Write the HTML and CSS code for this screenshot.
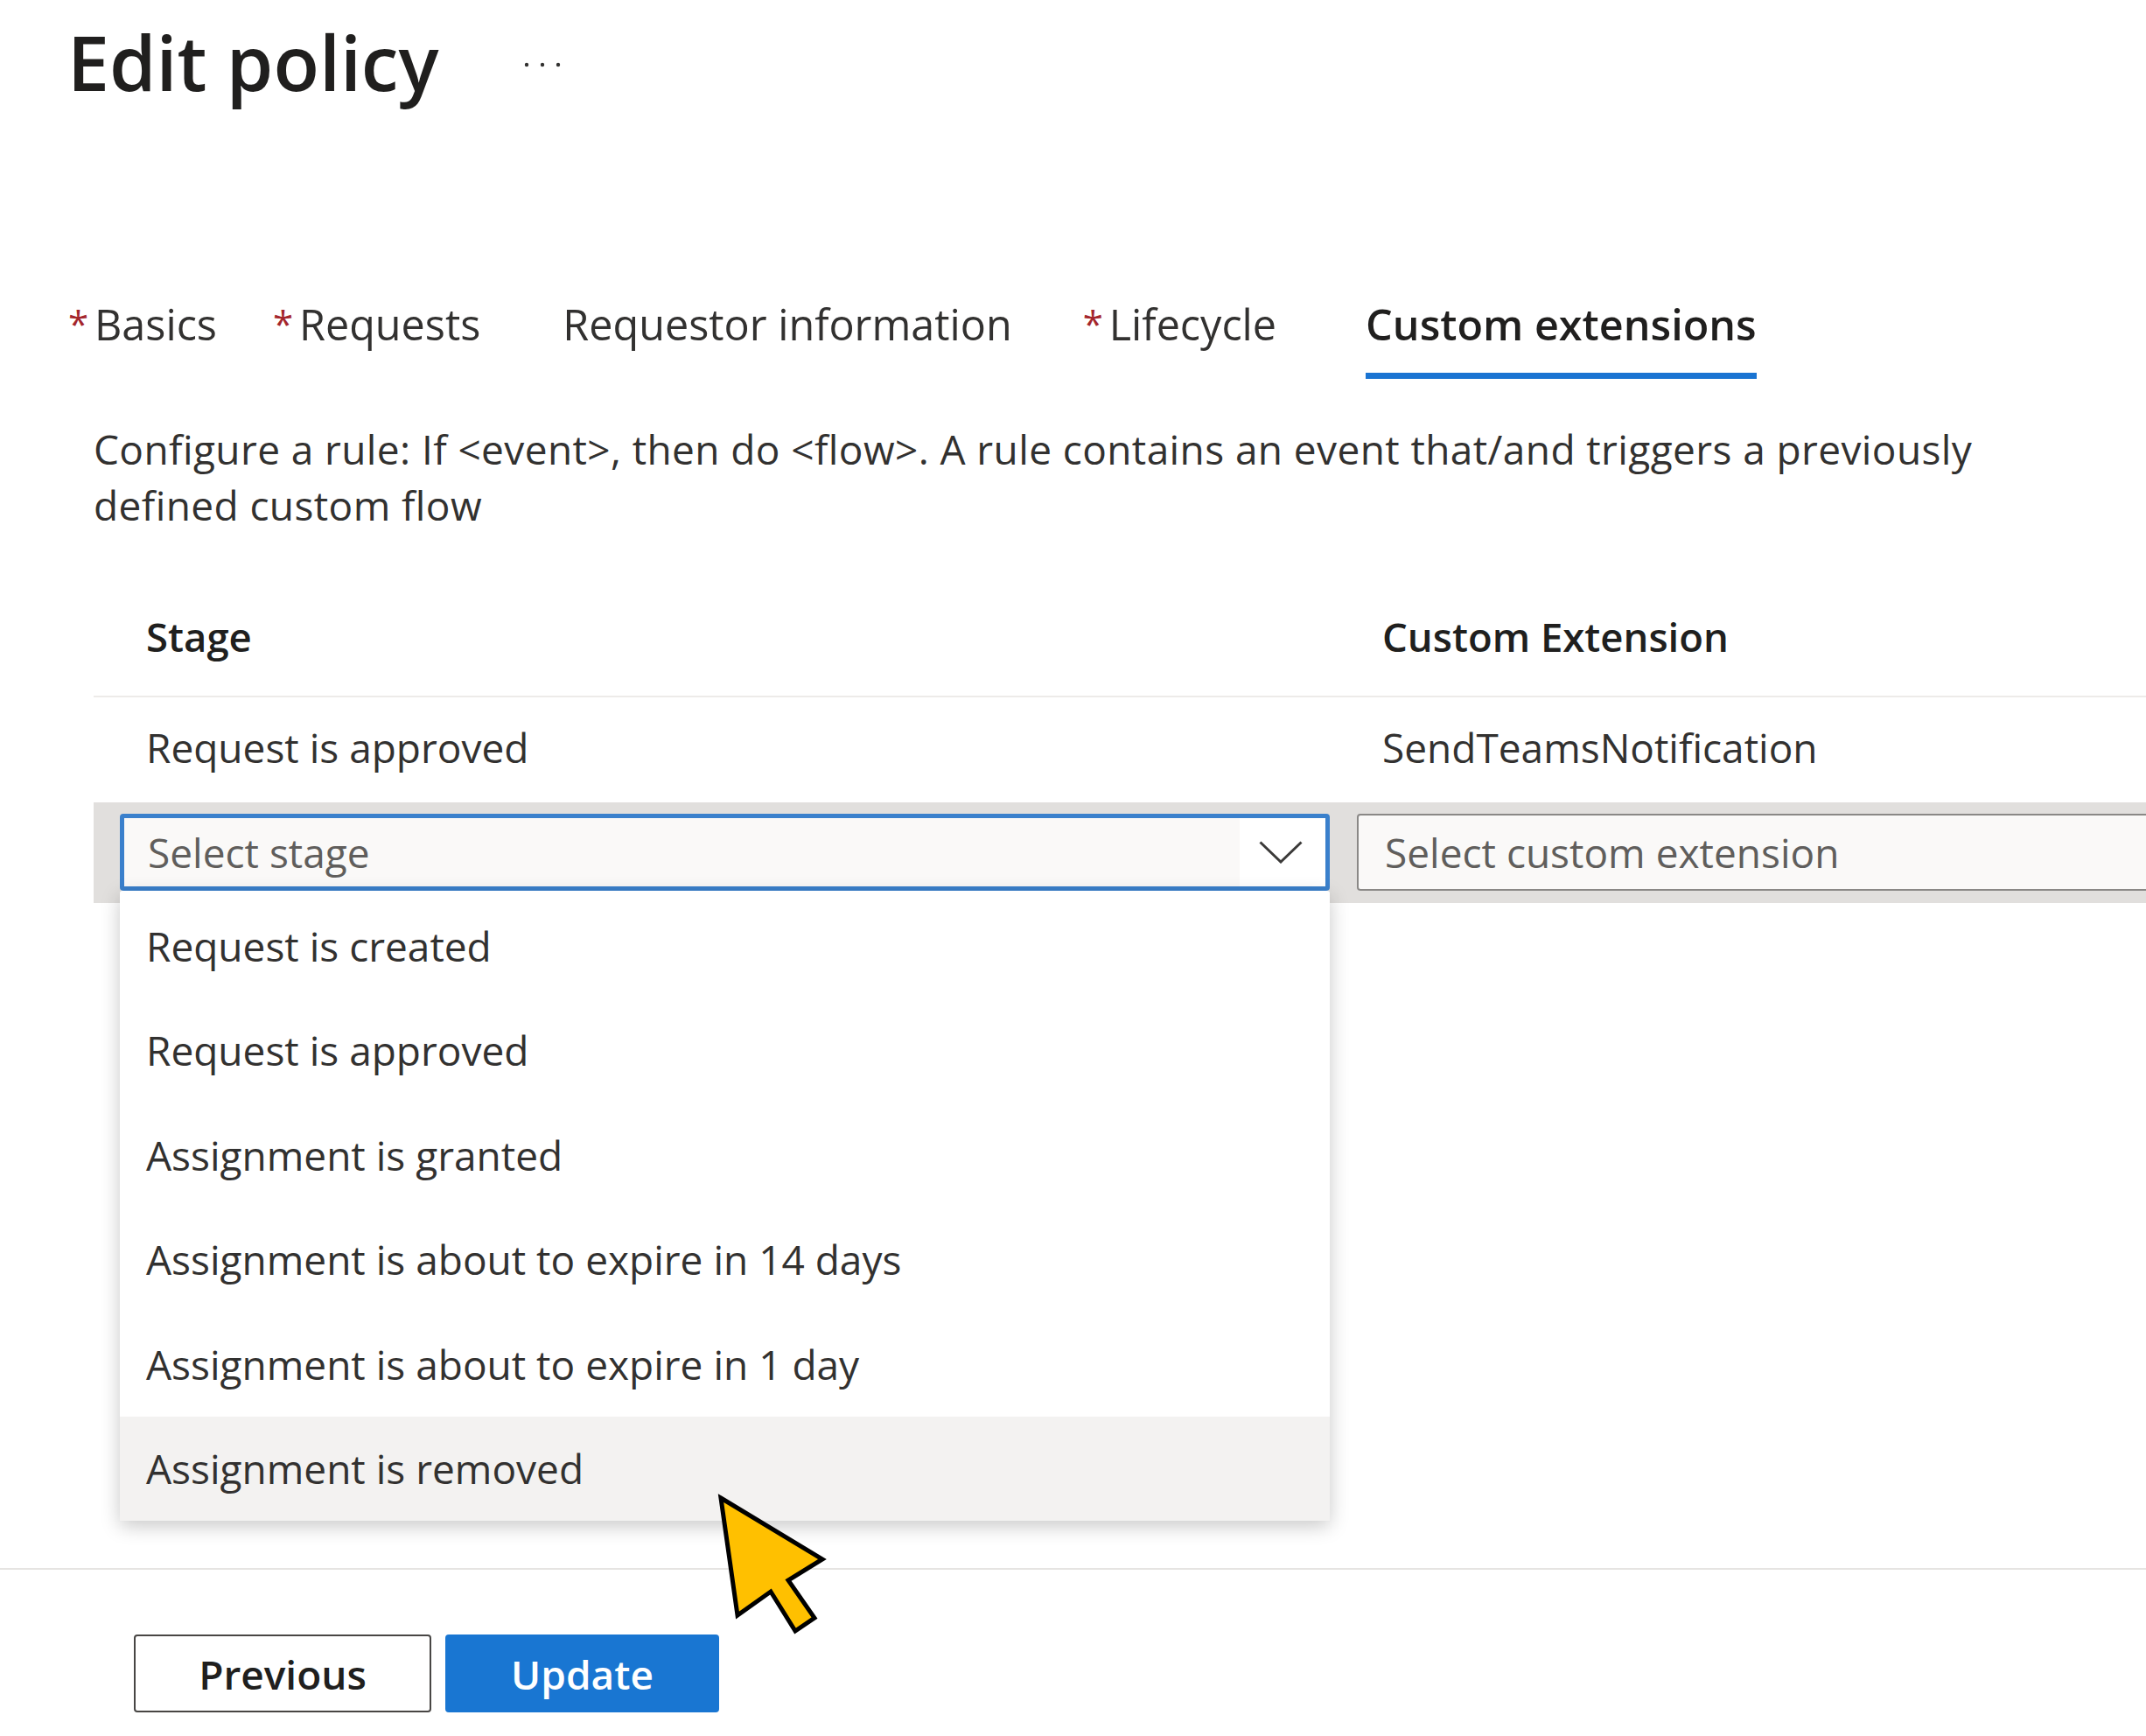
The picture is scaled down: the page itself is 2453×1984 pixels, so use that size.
FILE: index.html
```html
<!DOCTYPE html>
<html lang="en">
<head>
    <meta charset="UTF-8">
    <title>Edit policy</title>
    <link rel="stylesheet" href="styles.css">
</head>
<body>
    <div class="page">
        <header class="titleBar">
            <h1 class="pageTitle">Edit policy</h1>
            <svg class="moreIcon" width="42" height="6" viewBox="0 0 42 6"><circle cx="3" cy="3" r="2.2"/><circle cx="21" cy="3" r="2.2"/><circle cx="39" cy="3" r="2.2"/></svg>
        </header>

        <nav class="tabs">
            <a class="tab"><span class="star">*</span>Basics</a>
            <a class="tab"><span class="star">*</span>Requests</a>
            <a class="tab"><span class="star"></span>Requestor information</a>
            <a class="tab tabLifecycle"><span class="star">*</span>Lifecycle</a>
            <a class="tab tabActive">Custom extensions</a>
        </nav>

        <main class="content">
            <p class="intro">Configure a rule: If &lt;event&gt;, then do &lt;flow&gt;. A rule contains an event that/and triggers a previously<br>defined custom flow</p>

            <div class="tableRow tableHead">
                <div>Stage</div>
                <div>Custom Extension</div>
            </div>
            <div class="tableRow tableBody">
                <div>Request is approved</div>
                <div>SendTeamsNotification</div>
            </div>

            <div class="editRow">
                <div class="field fieldOpen">
                    <span class="fieldText">Select stage</span>
                    <span class="chevronBox">
                        <svg width="50" height="26" viewBox="0 0 50 26"><path d="M1.5 1.5 L25 24 L48.500 1.500" fill="none" stroke="#3b3a39" stroke-width="3"/></svg>
                    </span>
                    <ul class="menu">
                        <li>Request is created</li>
                        <li>Request is approved</li>
                        <li>Assignment is granted</li>
                        <li>Assignment is about to expire in 14 days</li>
                        <li>Assignment is about to expire in 1 day</li>
                        <li class="menuHover">Assignment is removed</li>
                    </ul>
                </div>
                <div class="field">
                    <span class="fieldText">Select custom extension</span>
                </div>
            </div>
        </main>

        <footer class="footer">
            <button class="btn btnSecondary">Previous</button>
            <button class="btn btnPrimary">Update</button>
        </footer>

        <!-- yellow pointer laid over the screenshot -->
        <svg class="pointer" width="130" height="170" viewBox="820 1702 130 170">
            <path d="M825 1711 L941 1781 L902 1805 L932 1848 L910 1863 L882 1818 L844 1845 Z" fill="#ffc000" stroke="#000" stroke-width="5"/>
        </svg>
    </div>
</body>
</html>
```

FILE: styles.css
```css
html, body {
    margin: 0;
    padding: 0;
    background-color: #fff;
}

.page {
    position: relative;
    width: 2453px;
    height: 1984px;
    overflow: hidden;
    font-family: "Open Sans", "Noto Sans", sans-serif;
    font-size: 46px;
    color: #323130;
}

.titleBar {
    display: flex;
    align-items: center;
    gap: 97px;
    height: 142px;
    padding-left: 77px;
}

.pageTitle {
    margin: 0;
    font-size: 86px;
    font-weight: 600;
    line-height: 142px;
    color: #201f1e;
}

.moreIcon {
    fill: #323130;
    margin-top: 6px;
}

.tabs {
    display: flex;
    gap: 66px;
    height: 100px;
    margin-top: 191px;
    padding-left: 80px;
    font-size: 48.500px;
}

.tab {
    display: flex;
    align-items: center;
    height: 100px;
    box-sizing: border-box;
    padding-bottom: 27px;
    white-space: nowrap;
}

.star {
    width: 28px;
    margin-left: -2px;
    margin-right: 2px;
    font-size: 42px;
    color: #a4262c;
}

.tabLifecycle {
    margin-left: 17px;
}

.tabActive {
    margin-left: 36px;
    padding-bottom: 20px;
    font-weight: 600;
    border-bottom: 7px solid #1a74d2;
    color: #201f1e;
}

.content {
    padding-left: 107px;
}

.intro {
    margin: 48px 0 0;
    line-height: 64px;
    letter-spacing: 0.4px;
}

.tableRow {
    display: grid;
    grid-template-columns: 1413px 1fr;
    padding-left: 60px;
}

.tableHead {
    height: 136px;
    margin-top: 46px;
    padding-top: 4px;
    align-items: center;
    border-bottom: 2px solid #edebe9;
    font-size: 45.500px;
    font-weight: 600;
    color: #201f1e;
}

.tableBody {
    height: 120px;
    box-sizing: border-box;
    padding-bottom: 6px;
    align-items: center;
}

.editRow {
    display: grid;
    grid-template-columns: 1383px 1000px;
    column-gap: 31px;
    height: 115px;
    box-sizing: border-box;
    padding: 13px 0 14px 30px;
    background-color: #e1dfdd;
}

.field {
    position: relative;
    display: flex;
    align-items: center;
    justify-content: space-between;
    box-sizing: border-box;
    height: 88px;
    padding-left: 30px;
    border: 2px solid #8a8886;
    border-radius: 4px;
    background-color: #faf9f8;
    color: #605e5c;
}

.fieldOpen {
    padding-left: 27px;
    border: 5px solid #3a80cc;
}

.chevronBox {
    display: flex;
    align-items: center;
    justify-content: center;
    width: 98px;
    height: 100%;
    padding-right: 5px;
    box-sizing: border-box;
    background-color: #fff;
}

.menu {
    position: absolute;
    top: 83px;
    left: -5px;
    right: -5px;
    margin: 0;
    padding: 0;
    list-style: none;
    background-color: #fff;
    box-shadow: 0 6px 22px rgba(0, 0, 0, 0.22);
    border-radius: 3px;
    color: #323130;
}

.menu li {
    display: flex;
    align-items: center;
    height: 119.500px;
    padding-left: 30px;
}

.menu li:first-child {
    margin-top: 3px;
}

.menuHover {
    background-color: #f3f2f1;
}

.footer {
    display: flex;
    gap: 16px;
    margin-top: 760px;
    padding: 74px 0 0 153px;
    border-top: 2px solid #e6e4e2;
}

.btn {
    box-sizing: border-box;
    height: 89px;
    border-radius: 4px;
    font-family: inherit;
    font-size: 46px;
    font-weight: 600;
}

.btnSecondary {
    width: 340px;
    border: 2px solid #484644;
    background-color: #fff;
    color: #201f1e;
}

.btnPrimary {
    width: 313px;
    border: none;
    background-color: #1976d2;
    color: #fff;
}

.pointer {
    position: absolute;
    left: 819px;
    top: 1703px;
}
```
